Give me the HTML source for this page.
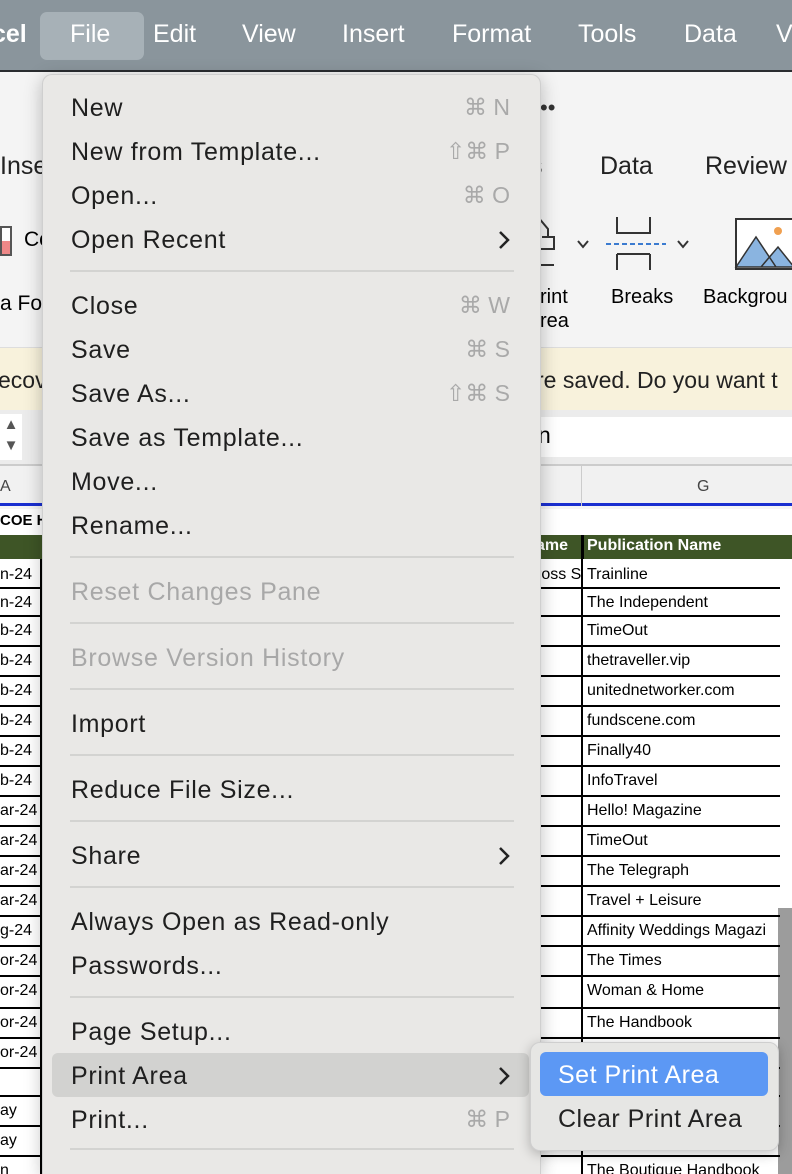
<!DOCTYPE html>
<html><head><meta charset="utf-8"><style>
*{margin:0;padding:0;box-sizing:border-box}
html,body{width:792px;height:1174px;overflow:hidden}
body{position:relative;background:#f5f5f5;font-family:"Liberation Sans",sans-serif}
.a{position:absolute;white-space:nowrap}
.mb{left:0;top:0;width:792px;height:72px;background:#8a959c;border-bottom:2px solid #2a2d30}
.mb span{position:absolute;top:20px;font-size:25px;color:#fff}
.cal{font-family:"Liberation Sans",sans-serif;font-size:16px;color:#000}
.menu{left:42px;top:74px;width:499px;height:1100px;background:#e9e8e6;border:1px solid #cfcfcf;border-bottom:none;border-radius:10px 10px 0 0;box-shadow:0 4px 18px rgba(0,0,0,.25);overflow:hidden}
.mi{position:absolute;left:28px;font-size:25px;letter-spacing:.7px;color:#1f1f1f}
.dis{color:#a8a8a8}
.sc{position:absolute;right:30px;font-size:23px;color:#a9a9a9}
.sep{position:absolute;left:27px;width:444px;height:2px;background:#d3d3d1}
.chev{position:absolute;right:30px;width:12px;height:20px}
</style></head><body>
<div class="a mb">
<span style="left:-8px;font-weight:bold">cel</span>
<div class="a" style="left:40px;top:12px;width:104px;height:48px;background:#a7b1b7;border-radius:7px"></div>
<span style="left:70px">File</span><span style="left:153px">Edit</span><span style="left:242px">View</span><span style="left:342px">Insert</span><span style="left:452px">Format</span><span style="left:578px">Tools</span><span style="left:684px">Data</span><span style="left:776px">V</span>
</div>
<div class="a" style="left:0;top:74px;width:792px;height:274px;background:#f4f4f4"></div>
<div class="a" style="left:0;top:152px;font-size:25px;color:#222">Inse</div>
<div class="a" style="left:530px;top:152px;font-size:25px;color:#222">s</div>
<div class="a" style="left:600px;top:152px;font-size:25px;color:#222">Data</div>
<div class="a" style="left:705px;top:152px;font-size:25px;color:#222">Review</div>
<div class="a" style="left:540px;top:95px;font-size:22px;color:#333">••</div>
<div class="a" style="left:0;top:226px;width:12px;height:30px;border:2px solid #555;background:linear-gradient(#fff 50%,#e88 50%)"></div>
<div class="a" style="left:24px;top:228px;font-size:21px">Co</div>
<div class="a" style="left:0;top:292px;font-size:21px">a Fo</div>
<div class="a" style="left:540px;top:285px;font-size:20px;line-height:24px">rint<br>rea</div>
<svg class="a" style="left:536px;top:215px" width="260" height="60" viewBox="0 0 260 60"><path d="M2 2 L12 14 V22 M6 22 H18 V34 H2 V50 H18 M42 26 l5 6 l5-6 M81 2 V18 H114 V2 M81 39 V55 M114 39 V55 M81 39 H114 M142 26 l5 6 l5-6" stroke="#333" stroke-width="2" fill="none"/><path d="M70 29 H130" stroke="#3b7bd0" stroke-width="2" stroke-dasharray="5 3"/><rect x="200" y="4" width="58" height="50" fill="#fff" stroke="#333" stroke-width="2"/><path d="M200 52 L220 22 L240 52Z M225 52 L242 32 L258 52Z" fill="#8ab4e0" stroke="#333" stroke-width="1.5"/><circle cx="242" cy="16" r="4" fill="#f0a050"/></svg>
<div class="a" style="left:611px;top:286px;font-size:20px">Breaks</div>
<div class="a" style="left:703px;top:286px;font-size:20px">Backgrou</div>
<div class="a" style="left:0;top:347px;width:792px;height:63px;background:#f8f2dc;border-top:1px solid #ddd"></div>
<div class="a" style="left:-2px;top:367px;font-size:23px;color:#222">ecov</div>
<div class="a" style="left:536px;top:367px;font-size:23px;color:#222">re saved. Do you want t</div>
<div class="a" style="left:0;top:410px;width:792px;height:56px;background:#ececec;border-bottom:2px solid #ccc"></div>
<div class="a" style="left:0;top:414px;width:22px;height:46px;background:#fff;font-size:15px;color:#555;line-height:21px;text-align:center">▲<br>▼</div>
<div class="a" style="left:540px;top:417px;width:252px;height:40px;background:#fff"></div>
<div class="a" style="left:538px;top:422px;font-size:23px">n</div>
<div class="a" style="left:0;top:466px;width:792px;height:40px;background:#f1f1f1;border-bottom:3px solid #1a2fd0"></div>
<div class="a" style="left:581px;top:466px;width:1px;height:40px;background:#ccc"></div>
<div class="a" style="left:0;top:478px;font-size:16px;color:#444">A</div>
<div class="a" style="left:697px;top:478px;font-size:16px;color:#444">G</div>
<div class="a" style="left:0;top:509px;width:792px;height:26px;background:#fff"></div>
<div class="a cal" style="left:0;top:512px;font-weight:bold;font-size:15px">COE H</div>
<div class="a" style="left:0;top:535px;width:792px;height:24px;background:#3e5526"></div>
<div class="a" style="left:581px;top:535px;width:3px;height:24px;background:#000"></div>
<div class="a cal" style="left:536px;top:537px;color:#fff;font-weight:bold;font-size:16px">ame</div>
<div class="a cal" style="left:587px;top:537px;color:#fff;font-weight:bold;font-size:16px">Publication Name</div>
<div class="a" style="left:0;top:559px;width:792px;height:615px;background:#fff"></div>
<div class="a" style="left:581px;top:559px;width:2px;height:615px;background:#000"></div>
<div class="a" style="left:778px;top:908px;width:14px;height:266px;background:#9c9c9c"></div>
<div id="rows"></div>
<script>
var tops=[561,589,617,647,677,707,737,767,797,827,857,887,917,947,977,1009,1039,1069,1097,1127,1157];
var L=["n-24","n-24","b-24","b-24","b-24","b-24","b-24","b-24","ar-24","ar-24","ar-24","ar-24","g-24","or-24","or-24","or-24","or-24","","ay","ay","n"];
var R=["Trainline","The Independent","TimeOut","thetraveller.vip","unitednetworker.com","fundscene.com","Finally40","InfoTravel","Hello! Magazine","TimeOut","The Telegraph","Travel + Leisure","Affinity Weddings Magazi","The Times","Woman & Home","The Handbook","","","","ngo...gg","The Boutique Handbook"];
var h="";
for(var i=0;i<tops.length;i++){var t=tops[i];var n=(tops[i+1]||1187)-t;
if(t+n-2<1174)h+='<div class="a" style="left:0;top:'+(t+n-2)+'px;width:780px;height:2px;background:#000"></div>';
h+='<div class="a cal" style="left:0;top:'+(t+5)+'px">'+L[i]+'</div>';
h+='<div class="a cal" style="left:587px;top:'+(t+5)+'px">'+R[i]+'</div>';}
h+='<div class="a cal" style="left:536px;top:566px">ross S</div>';
document.getElementById("rows").innerHTML=h;
</script>
<div class="a" style="left:40px;top:559px;width:2px;height:615px;background:#000"></div>
<div class="a menu">
<div class="mi" style="top:19px">New</div><div class="sc" style="top:19px">⌘ N</div>
<div class="mi" style="top:63px">New from Template...</div><div class="sc" style="top:63px">⇧⌘ P</div>
<div class="mi" style="top:107px">Open...</div><div class="sc" style="top:107px">⌘ O</div>
<div class="mi" style="top:151px">Open Recent</div><svg class="chev" style="top:155px" viewBox="0 0 12 20"><path d="M2 2 L10 10 L2 18" stroke="#222" stroke-width="2.5" fill="none"/></svg>
<div class="sep" style="top:195px"></div>
<div class="mi" style="top:217px">Close</div><div class="sc" style="top:217px">⌘ W</div>
<div class="mi" style="top:261px">Save</div><div class="sc" style="top:261px">⌘ S</div>
<div class="mi" style="top:305px">Save As...</div><div class="sc" style="top:305px">⇧⌘ S</div>
<div class="mi" style="top:349px">Save as Template...</div>
<div class="mi" style="top:393px">Move...</div>
<div class="mi" style="top:437px">Rename...</div>
<div class="sep" style="top:481px"></div>
<div class="mi dis" style="top:503px">Reset Changes Pane</div>
<div class="sep" style="top:547px"></div>
<div class="mi dis" style="top:569px">Browse Version History</div>
<div class="sep" style="top:613px"></div>
<div class="mi" style="top:635px">Import</div>
<div class="sep" style="top:679px"></div>
<div class="mi" style="top:701px">Reduce File Size...</div>
<div class="sep" style="top:745px"></div>
<div class="mi" style="top:767px">Share</div><svg class="chev" style="top:771px" viewBox="0 0 12 20"><path d="M2 2 L10 10 L2 18" stroke="#222" stroke-width="2.5" fill="none"/></svg>
<div class="sep" style="top:811px"></div>
<div class="mi" style="top:833px">Always Open as Read-only</div>
<div class="mi" style="top:877px">Passwords...</div>
<div class="sep" style="top:921px"></div>
<div class="mi" style="top:943px">Page Setup...</div>
<div class="a" style="left:9px;top:978px;width:477px;height:44px;background:#d2d2d0;border-radius:6px"></div>
<div class="mi" style="top:987px">Print Area</div><svg class="chev" style="top:991px" viewBox="0 0 12 20"><path d="M2 2 L10 10 L2 18" stroke="#222" stroke-width="2.5" fill="none"/></svg>
<div class="mi" style="top:1031px">Print...</div><div class="sc" style="top:1031px">⌘ P</div>
<div class="sep" style="top:1073px"></div>
</div>
<div class="a" style="left:530px;top:1042px;width:249px;height:109px;background:#e6e6e4;border:1px solid #cfcfcf;border-radius:10px;box-shadow:0 3px 12px rgba(0,0,0,.25)"></div>
<div class="a" style="left:540px;top:1052px;width:228px;height:44px;background:#5c98f4;border-radius:6px"></div>
<div class="a" style="left:558px;top:1061px;font-size:25px;letter-spacing:.5px;color:#fff">Set Print Area</div>
<div class="a" style="left:558px;top:1105px;font-size:25px;letter-spacing:.5px;color:#222">Clear Print Area</div>
</body></html>
